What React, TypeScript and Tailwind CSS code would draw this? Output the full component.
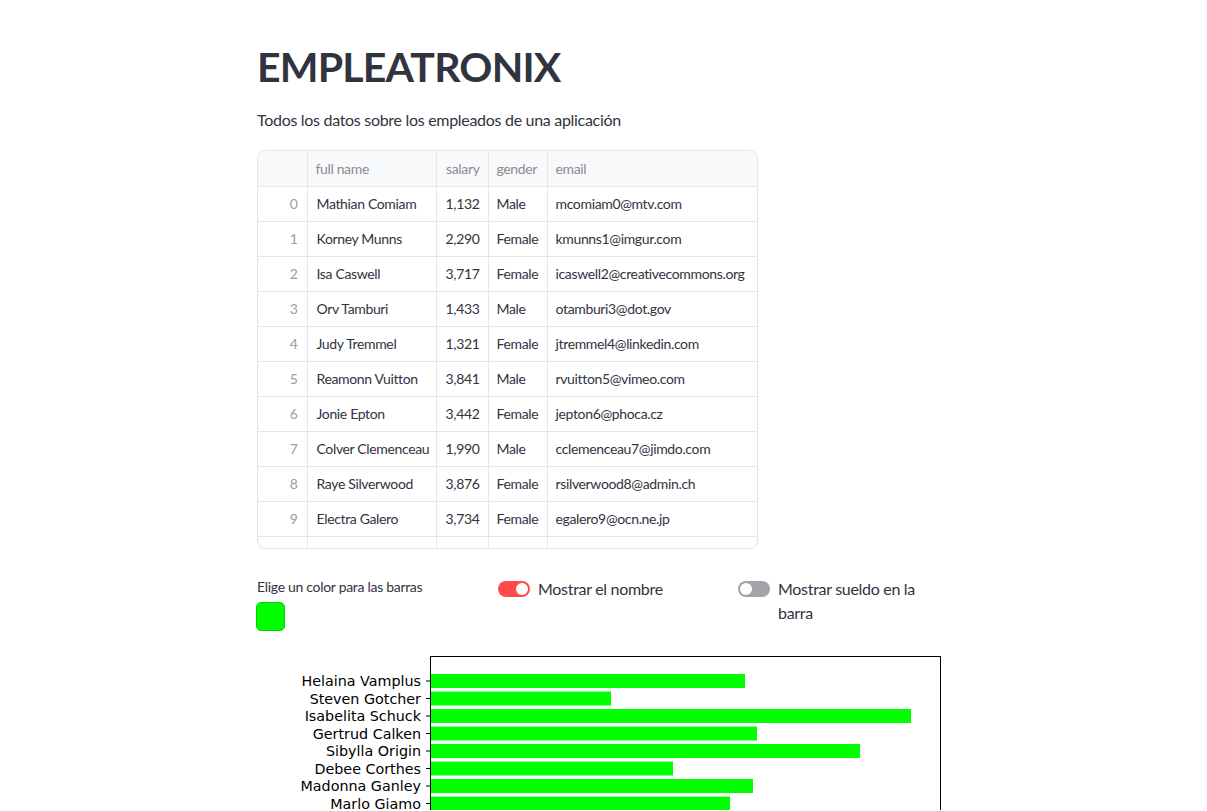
import React from "react";

const rows = [
  ["Mathian Comiam", "1,132", "Male", "mcomiam0@mtv.com"],
  ["Korney Munns", "2,290", "Female", "kmunns1@imgur.com"],
  ["Isa Caswell", "3,717", "Female", "icaswell2@creativecommons.org"],
  ["Orv Tamburi", "1,433", "Male", "otamburi3@dot.gov"],
  ["Judy Tremmel", "1,321", "Female", "jtremmel4@linkedin.com"],
  ["Reamonn Vuitton", "3,841", "Male", "rvuitton5@vimeo.com"],
  ["Jonie Epton", "3,442", "Female", "jepton6@phoca.cz"],
  ["Colver Clemenceau", "1,990", "Male", "cclemenceau7@jimdo.com"],
  ["Raye Silverwood", "3,876", "Female", "rsilverwood8@admin.ch"],
  ["Electra Galero", "3,734", "Female", "egalero9@ocn.ne.jp"],
];

const bars: [string, number][] = [
  ["Helaina Vamplus", 314],
  ["Steven Gotcher", 180],
  ["Isabelita Schuck", 480],
  ["Gertrud Calken", 326],
  ["Sibylla Origin", 429],
  ["Debee Corthes", 242],
  ["Madonna Ganley", 322],
  ["Marlo Giamo", 299],
];

const font = { fontFamily: "Lato, 'Noto Sans', sans-serif" };

function Chart() {
  const ax = 173;
  const top = 6;
  return (
    <svg width="704" height="160" className="block">
      <rect x={ax + 0.5} y={top + 0.5} width={510} height={400} fill="none" stroke="#000" strokeWidth="1" />
      {bars.map(([name, w], i) => {
        const cy = top + 25 + i * 17.5;
        return (
          <g key={name}>
            <rect x={ax + 1} y={cy - 7} width={w} height={14} fill="#00ff00" />
            <line x1={ax - 4} x2={ax} y1={cy} y2={cy} stroke="#000" strokeWidth="1" />
            <text
              x={ax - 9}
              y={cy + 5}
              textAnchor="end"
              fontSize="14.3"
              fill="#000"
              style={{ fontFamily: "'DejaVu Sans', sans-serif" }}
            >
              {name}
            </text>
          </g>
        );
      })}
    </svg>
  );
}

function Toggle({ on }: { on: boolean }) {
  return (
    <div
      className={`relative h-4 w-8 shrink-0 rounded-full ${on ? "bg-[#ff4b4b]" : "bg-[#a3a3a8]"}`}
    >
      <div
        className={`absolute top-[2px] h-3 w-3 rounded-full bg-white ${on ? "right-[2px]" : "left-[2px]"}`}
      />
    </div>
  );
}

const cell = "border-b border-r border-[#e6e6ea]";

export default function App() {
  return (
    <div className="min-h-[811px] bg-white text-[#31333f]" style={font}>
      <div className="ml-[257px] w-[704px] pt-[40px]">
        <h1 className="text-[41px] font-bold leading-[54px] tracking-[-0.8px] text-[#31333f]">EMPLEATRONIX</h1>
        <p className="mt-[14px] text-[16px] leading-[24px] tracking-[-0.3px]">
          Todos los datos sobre los empleados de una aplicación
        </p>

        <div className="mt-[18px] h-[399px] w-[501px] overflow-hidden rounded-lg border border-[#e6e6ea] text-[14px] tracking-[-0.35px]">
          <table className="w-[500px] table-fixed border-collapse">
            <colgroup>
              <col className="w-[49px]" />
              <col className="w-[129px]" />
              <col className="w-[52px]" />
              <col className="w-[59px]" />
              <col className="w-[211px]" />
            </colgroup>
            <thead>
              <tr className="h-[35px] bg-[#f8f9fb] text-[#8a8b92]">
                <th className={`${cell} font-normal`}></th>
                <th className={`${cell} pl-[8px] text-left font-normal`}>full name</th>
                <th className={`${cell} pr-[8px] text-right font-normal`}>salary</th>
                <th className={`${cell} pl-[8px] text-left font-normal`}>gender</th>
                <th className="border-b border-[#e6e6ea] pl-[8px] text-left font-normal">email</th>
              </tr>
            </thead>
            <tbody>
              {rows.map((r, i) => (
                <tr key={i} className="h-[35px]">
                  <td className={`${cell} pr-[9px] text-right text-[#9b9ca3]`}>{i}</td>
                  <td className={`${cell} whitespace-nowrap pl-[9px]`}>{r[0]}</td>
                  <td className={`${cell} pr-[8px] text-right`}>{r[1]}</td>
                  <td className={`${cell} pl-[8px]`}>{r[2]}</td>
                  <td className="whitespace-nowrap border-b border-[#e6e6ea] pl-[8px]">{r[3]}</td>
                </tr>
              ))}
              <tr className="h-[35px]">
                <td className="border-r border-[#e6e6ea]"></td>
                <td className="border-r border-[#e6e6ea]"></td>
                <td className="border-r border-[#e6e6ea]"></td>
                <td className="border-r border-[#e6e6ea]"></td>
                <td></td>
              </tr>
            </tbody>
          </table>
        </div>

        <div className="mt-[28px] grid grid-cols-3 gap-4 tracking-[-0.3px]">
          <div>
            <div className="text-[14px] leading-[20px]">Elige un color para las barras</div>
            <div className="mt-[5px] ml-[-1px] h-[29px] w-[29px] rounded-[5px] border border-[#00d000] bg-[#00ff00]" />
          </div>
          <div className="flex items-start gap-2">
            <div className="mt-[4px] ml-[1px]">
              <Toggle on />
            </div>
            <span className="text-[16px] leading-[24px]">Mostrar el nombre</span>
          </div>
          <div className="flex items-start gap-2">
            <div className="mt-[4px] ml-[1px]">
              <Toggle on={false} />
            </div>
            <span className="max-w-[160px] text-[16px] leading-[24px]">Mostrar sueldo en la barra</span>
          </div>
        </div>

        <div className="mt-[19px]">
          <Chart />
        </div>
      </div>
    </div>
  );
}
